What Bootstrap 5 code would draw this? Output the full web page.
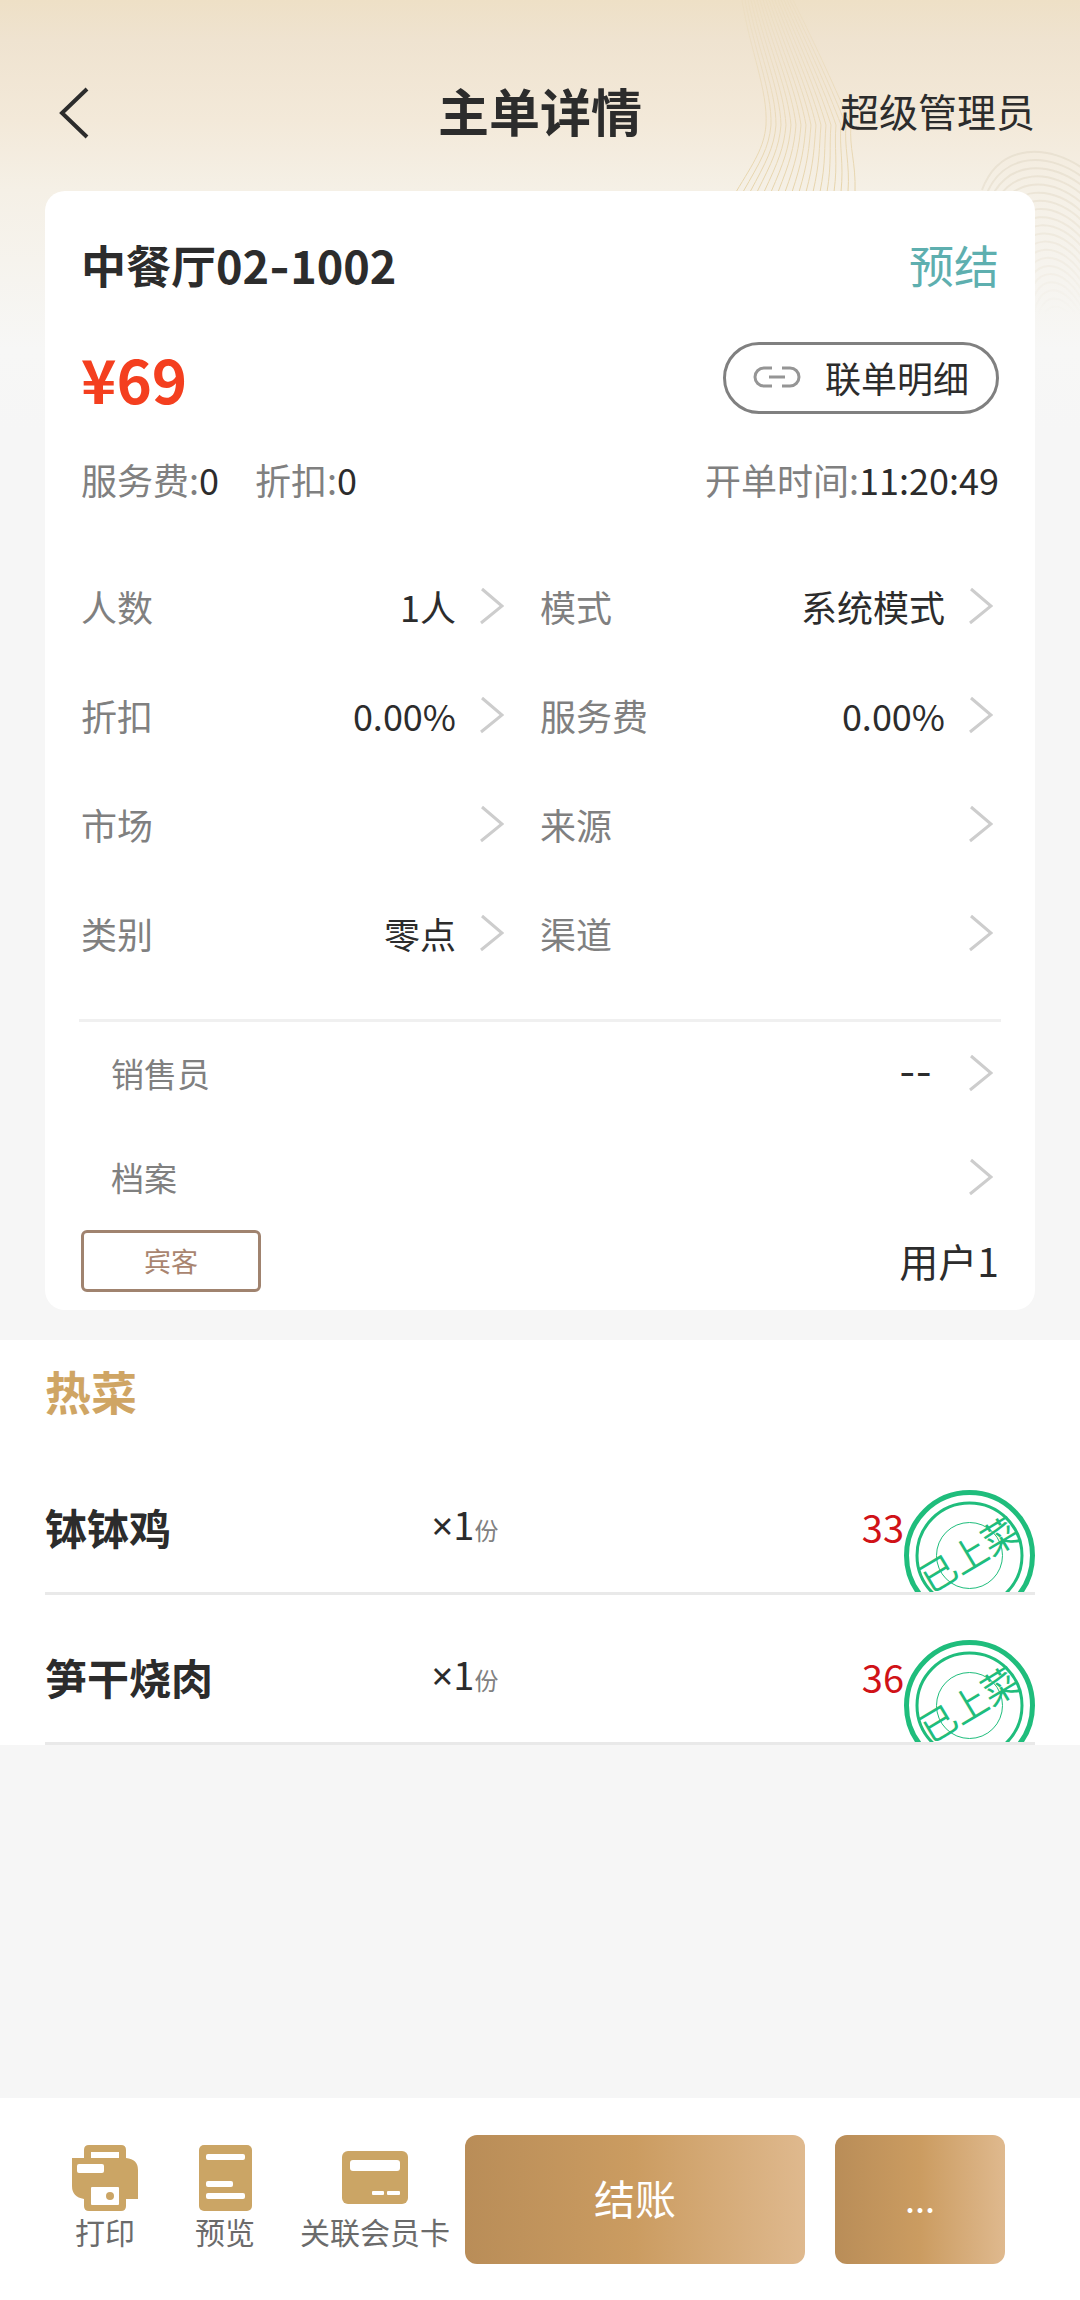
<!DOCTYPE html>
<html lang="zh-CN">
<head>
<meta charset="utf-8">
<meta name="viewport" content="width=device-width, initial-scale=1">
<title>主单详情</title>
<link href="https://cdn.jsdelivr.net/npm/bootstrap@5.3.0/dist/css/bootstrap.min.css" rel="stylesheet">
<style>
  :root { --ink: #2c2c2c; --muted: #808080; --gold: #cba565; }
  body { background: #f6f6f6; color: var(--ink); font-family: "Noto Sans CJK SC", sans-serif; font-size: 36px; line-height: 54px; }
  .page { background: linear-gradient(180deg, #eee0c6 0, #efe3d0 40px, #f3e9d9 120px, #f5f0e6 190px, #f7f7f6 350px, #f6f6f6 430px) no-repeat; }
  .waves { top: 0; right: 0; width: 380px; height: 330px; }
  .topbar { padding: 70px 45px 41px; }
  .topbar > * { flex: 1 1 0; min-height: 80px; }
  .topbar h1 { font-size: 51px; line-height: 80px; }
  .back-btn { padding: 0 0 0 13px; }
  .admin { font-size: 39px; color: var(--ink); }
  .btn { color: var(--ink); font-size: 36px; line-height: 54px; border-radius: 0; }
  .order-card { margin: 0 45px 30px; padding: 34px 36px 18px; border-radius: 20px; }
  .heading { font-size: 45px; line-height: 80px; }
  .dash { font-family: Inter, sans-serif; line-height: 1; }
  .status { color: #5eafaf; }
  .price-row { margin-top: 37px; }
  .total { font-size: 60px; line-height: 72px; color: #f43f1f; }
  .btn-joint { border: 3px solid var(--muted); border-radius: 36px; padding: 5px 27px 7px; height: 72px; }
  .fees { margin: 38px 0 46px; }
  .fee { margin-right: 36px; }
  .muted-text { color: var(--muted); }
  .cell { height: 109px; padding: 0 36px 2px 0; }
  .col-6:nth-child(even) .cell { padding-right: 6px; }
  .cell svg, .wide-cell svg { margin-left: 24px; flex: none; }
  .rule { height: 3px; background: #f0f0f0; margin: 31px -2px 0; }
  .wide-cell { height: 104px; padding: 0 6px 3px 30px; font-size: 33px; }
  .wide-cell svg { margin-left: 37px; }
  .wide-cell .dash { font-size: 36px; }
  .guest-tag { width: 180px; height: 62px; border: 3px solid #a0836f; border-radius: 6px; color: #a98570; font-size: 27px; line-height: 56px; }
  .guest-name { font-size: 39px; line-height: 60px; }
  .dishes { padding: 0 45px; }
  .dishes h2 { font-size: 46px; line-height: 101px; padding-bottom: 4px; color: #cfa564; }
  .dish { height: 150px; padding: 17px 131px 0 0; border-bottom: 3px solid #e9e9e9; }
  .dish-name { width: 45%; font-size: 42px; }
  .dish-qty { font-size: 38px; }
  .times { font-family: "Noto Sans", sans-serif; }
  .dish-qty small { font-size: 24px; color: var(--muted); }
  .dish-price { font-size: 38px; color: #d01217; }
  .stamp { top: 45px; right: 0; }
  .actions { padding: 37px 75px 36px 72px; }
  .tool { padding: 0 0 4px; font-size: 30px; line-height: 40px; color: #6b6b6b; white-space: nowrap; }
  .tool:first-child { margin-right: 12px; }
  .tool svg { display: block; margin: 0 auto; }
  .tools { gap: 45px; margin-right: 15px; }
  .pay-buttons { gap: 30px; }
  .btn-gold { flex: 1 1 0; height: 129px; border: 0; border-radius: 12px; padding: 0 0 6px; color: #fff; font-size: 41px; background: linear-gradient(90deg, #b98d58, #cb9c61 50%, #dfb98e); }
  .btn-pay { flex-grow: 2; }
  .btn-more { font-size: 36px; }
  .btn-gold:hover { color: #fff; }
</style>
<script src="https://cdn.jsdelivr.net/npm/bootstrap@5.3.0/dist/js/bootstrap.bundle.min.js"></script>
</head>
<body>
<svg class="d-none" aria-hidden="true">
  <symbol id="chev" viewBox="0 0 24 38"><path d="M2 2 22 19 1 36" fill="none" stroke="#cdcdcd" stroke-width="3"/></symbol>
  <symbol id="served" viewBox="0 0 131 131">
    <g fill="none" stroke="#1fbd7c">
      <circle cx="65.500" cy="65.500" r="63" stroke-width="5"/>
      <circle cx="65.500" cy="65.500" r="52.500" stroke-width="3"/>
      <circle cx="65.500" cy="65.500" r="33" stroke-width="1"/>
    </g>
    <text x="66" y="78" text-anchor="middle" font-size="36" fill="#1fbd7c" transform="rotate(-31 66 66)">已上菜</text>
  </symbol>
</svg>
<div class="page position-relative d-flex flex-column min-vh-100">
  <svg class="waves position-absolute" viewBox="0 0 380 330" aria-hidden="true">
    <defs>
      <linearGradient id="fadeIn" x1="0" y1="0" x2="0" y2="1"><stop offset="0" stop-color="#fff" stop-opacity=".15"/><stop offset=".5" stop-color="#fff" stop-opacity=".6"/><stop offset="1" stop-color="#fff"/></linearGradient>
      <linearGradient id="fadeOut" x1="0" y1="0" x2="0" y2="1"><stop offset="0" stop-color="#fff"/><stop offset="1" stop-color="#fff" stop-opacity="0"/></linearGradient>
      <mask id="m1" maskUnits="userSpaceOnUse" x="0" y="0" width="380" height="330"><rect width="380" height="200" fill="url(#fadeIn)"/></mask>
      <mask id="m2" maskUnits="userSpaceOnUse" x="0" y="0" width="380" height="330"><rect y="140" width="380" height="175" fill="url(#fadeOut)"/></mask>
    </defs>
    <g id="ribbon" fill="none" stroke="#e6d3a9" mask="url(#m1)"></g>
    <g id="fan" fill="none" stroke="#e8e0d0" stroke-width="2" mask="url(#m2)"></g>
  </svg>

  <header class="topbar position-relative d-flex align-items-center">
    <div class="d-flex">
      <button type="button" class="btn back-btn border-0" aria-label="返回"><svg width="32" height="54" viewBox="0 0 32 54"><path d="M29 3 4 27 29 51" fill="none" stroke="#2c2c2c" stroke-width="4"/></svg></button>
    </div>
    <h1 class="fw-bold text-center text-nowrap m-0">主单详情</h1>
    <div class="d-flex justify-content-end align-items-center"><a href="#" class="admin text-decoration-none text-nowrap">超级管理员</a></div>
  </header>

  <main class="position-relative">
    <section class="order-card bg-white">
      <div class="heading d-flex justify-content-between">
        <span class="fw-bold">中餐厅02<span class="dash">-</span>1002</span><span class="status">预结</span>
      </div>
      <div class="price-row d-flex justify-content-between align-items-center">
        <span class="total fw-bold">¥69</span>
        <button type="button" class="btn btn-joint d-flex align-items-center">
          <svg class="me-4" width="48" height="22" viewBox="0 0 48 22"><path d="M19 2H11a9 9 0 0 0 0 18h8M29 2h8a9 9 0 0 1 0 18h-8M16 11h16" fill="none" stroke="#959595" stroke-width="3"/></svg>
          联单明细
        </button>
      </div>
      <div class="fees d-flex">
        <span class="fee"><span class="muted-text">服务费:</span>0</span>
        <span class="fee"><span class="muted-text">折扣:</span>0</span>
        <span class="ms-auto"><span class="muted-text">开单时间:</span>11:20:49</span>
      </div>
      <div class="row g-0">
        <div class="col-6"><button type="button" class="btn cell border-0 w-100 d-flex align-items-center"><span class="muted-text me-auto">人数</span>1人<svg width="24" height="38"><use href="#chev"/></svg></button></div>
        <div class="col-6"><button type="button" class="btn cell border-0 w-100 d-flex align-items-center"><span class="muted-text me-auto">模式</span>系统模式<svg width="24" height="38"><use href="#chev"/></svg></button></div>
        <div class="col-6"><button type="button" class="btn cell border-0 w-100 d-flex align-items-center"><span class="muted-text me-auto">折扣</span>0.00%<svg width="24" height="38"><use href="#chev"/></svg></button></div>
        <div class="col-6"><button type="button" class="btn cell border-0 w-100 d-flex align-items-center"><span class="muted-text me-auto">服务费</span>0.00%<svg width="24" height="38"><use href="#chev"/></svg></button></div>
        <div class="col-6"><button type="button" class="btn cell border-0 w-100 d-flex align-items-center"><span class="muted-text me-auto">市场</span><svg width="24" height="38"><use href="#chev"/></svg></button></div>
        <div class="col-6"><button type="button" class="btn cell border-0 w-100 d-flex align-items-center"><span class="muted-text me-auto">来源</span><svg width="24" height="38"><use href="#chev"/></svg></button></div>
        <div class="col-6"><button type="button" class="btn cell border-0 w-100 d-flex align-items-center"><span class="muted-text me-auto">类别</span>零点<svg width="24" height="38"><use href="#chev"/></svg></button></div>
        <div class="col-6"><button type="button" class="btn cell border-0 w-100 d-flex align-items-center"><span class="muted-text me-auto">渠道</span><svg width="24" height="38"><use href="#chev"/></svg></button></div>
      </div>
      <div class="rule"></div>
      <button type="button" class="btn wide-cell border-0 w-100 d-flex align-items-center"><span class="muted-text me-auto">销售员</span><span class="dash">--</span><svg width="24" height="38"><use href="#chev"/></svg></button>
      <button type="button" class="btn wide-cell border-0 w-100 d-flex align-items-center"><span class="muted-text me-auto">档案</span><svg width="24" height="38"><use href="#chev"/></svg></button>
      <div class="d-flex justify-content-between">
        <span class="guest-tag text-center">宾客</span><span class="guest-name">用户1</span>
      </div>
    </section>

    <section class="dishes bg-white">
      <h2 class="fw-bold m-0">热菜</h2>
      <ul class="list-unstyled m-0">
        <li class="dish position-relative overflow-hidden d-flex align-items-center">
          <span class="dish-name fw-bold">钵钵鸡</span><span class="dish-qty"><span class="times">×</span>1<small>份</small></span><span class="dish-price ms-auto">33</span>
          <svg class="stamp position-absolute" width="131" height="131" role="img" aria-label="已上菜"><use href="#served"/></svg>
        </li>
        <li class="dish position-relative overflow-hidden d-flex align-items-center">
          <span class="dish-name fw-bold">笋干烧肉</span><span class="dish-qty"><span class="times">×</span>1<small>份</small></span><span class="dish-price ms-auto">36</span>
          <svg class="stamp position-absolute" width="131" height="131" role="img" aria-label="已上菜"><use href="#served"/></svg>
        </li>
      </ul>
    </section>
  </main>

  <footer class="actions bg-white mt-auto d-flex align-items-center">
    <div class="tools d-flex">
      <button type="button" class="btn tool border-0">
        <svg width="66" height="66" viewBox="0 0 66 66"><path fill="#cba565" d="M17 0h32q5 0 5 5v8q12 1 12 12v29H54v7q0 5-5 5H17q-5 0-5-5v-7Q0 52 0 41V13h12V5q0-5 5-5z"/><g fill="#fff"><rect x="19" y="7" width="28" height="6"/><rect x="5" y="19" width="27" height="9" rx="2"/><rect x="19" y="42" width="28" height="18" rx="1"/></g><circle cx="38" cy="51" r="4" fill="#cba565"/></svg>
        打印
      </button>
      <button type="button" class="btn tool border-0">
        <svg width="53" height="66" viewBox="0 0 53 66"><rect width="53" height="66" rx="5" fill="#cba565"/><g fill="#fff"><rect x="7" y="9" width="39" height="6" rx="2"/><rect x="7" y="36" width="27" height="6" rx="2"/><rect x="7" y="48" width="39" height="6" rx="2"/></g></svg>
        预览
      </button>
      <button type="button" class="btn tool border-0">
        <svg width="66" height="66" viewBox="0 0 66 66"><rect y="6" width="66" height="53" rx="6" fill="#cba565"/><g fill="#fff"><rect x="8" y="15" width="50" height="11" rx="3"/><rect x="30" y="46" width="12" height="4" rx="1"/><rect x="45" y="46" width="13" height="4" rx="1"/></g></svg>
        关联会员卡
      </button>
    </div>
    <div class="pay-buttons d-flex flex-grow-1">
      <button type="button" class="btn btn-gold btn-pay">结账</button>
      <button type="button" class="btn btn-gold btn-more">...</button>
    </div>
  </footer>
</div>
<script>
  const draw = (id, list) => { document.getElementById(id).innerHTML = list.map(d => `<path d="${d}"/>`).join(''); };
  // Ribbon: lines flow down from the top and sweep to the left
  draw('ribbon', Array.from({ length: 18 }, (_, i) =>
    `M${42 + i * 3} 0C${50 + i * 4} 50 ${68 + i * 4} 90 ${66 + i * 5} 125C${64 + i * 5} 148 ${54 + i * 6} 162 ${36 + i * 7} 192`));
  // Fan: nested crests running off the right edge
  draw('fan', Array.from({ length: 20 }, (_, i) =>
    `M${282 + i * 3} ${190 + i * 8}C${300 + i * 2} ${142 + i * 8} ${350 + i} ${144 + i * 8} 385 ${170 + i * 9}`));
</script>
</body>
</html>
